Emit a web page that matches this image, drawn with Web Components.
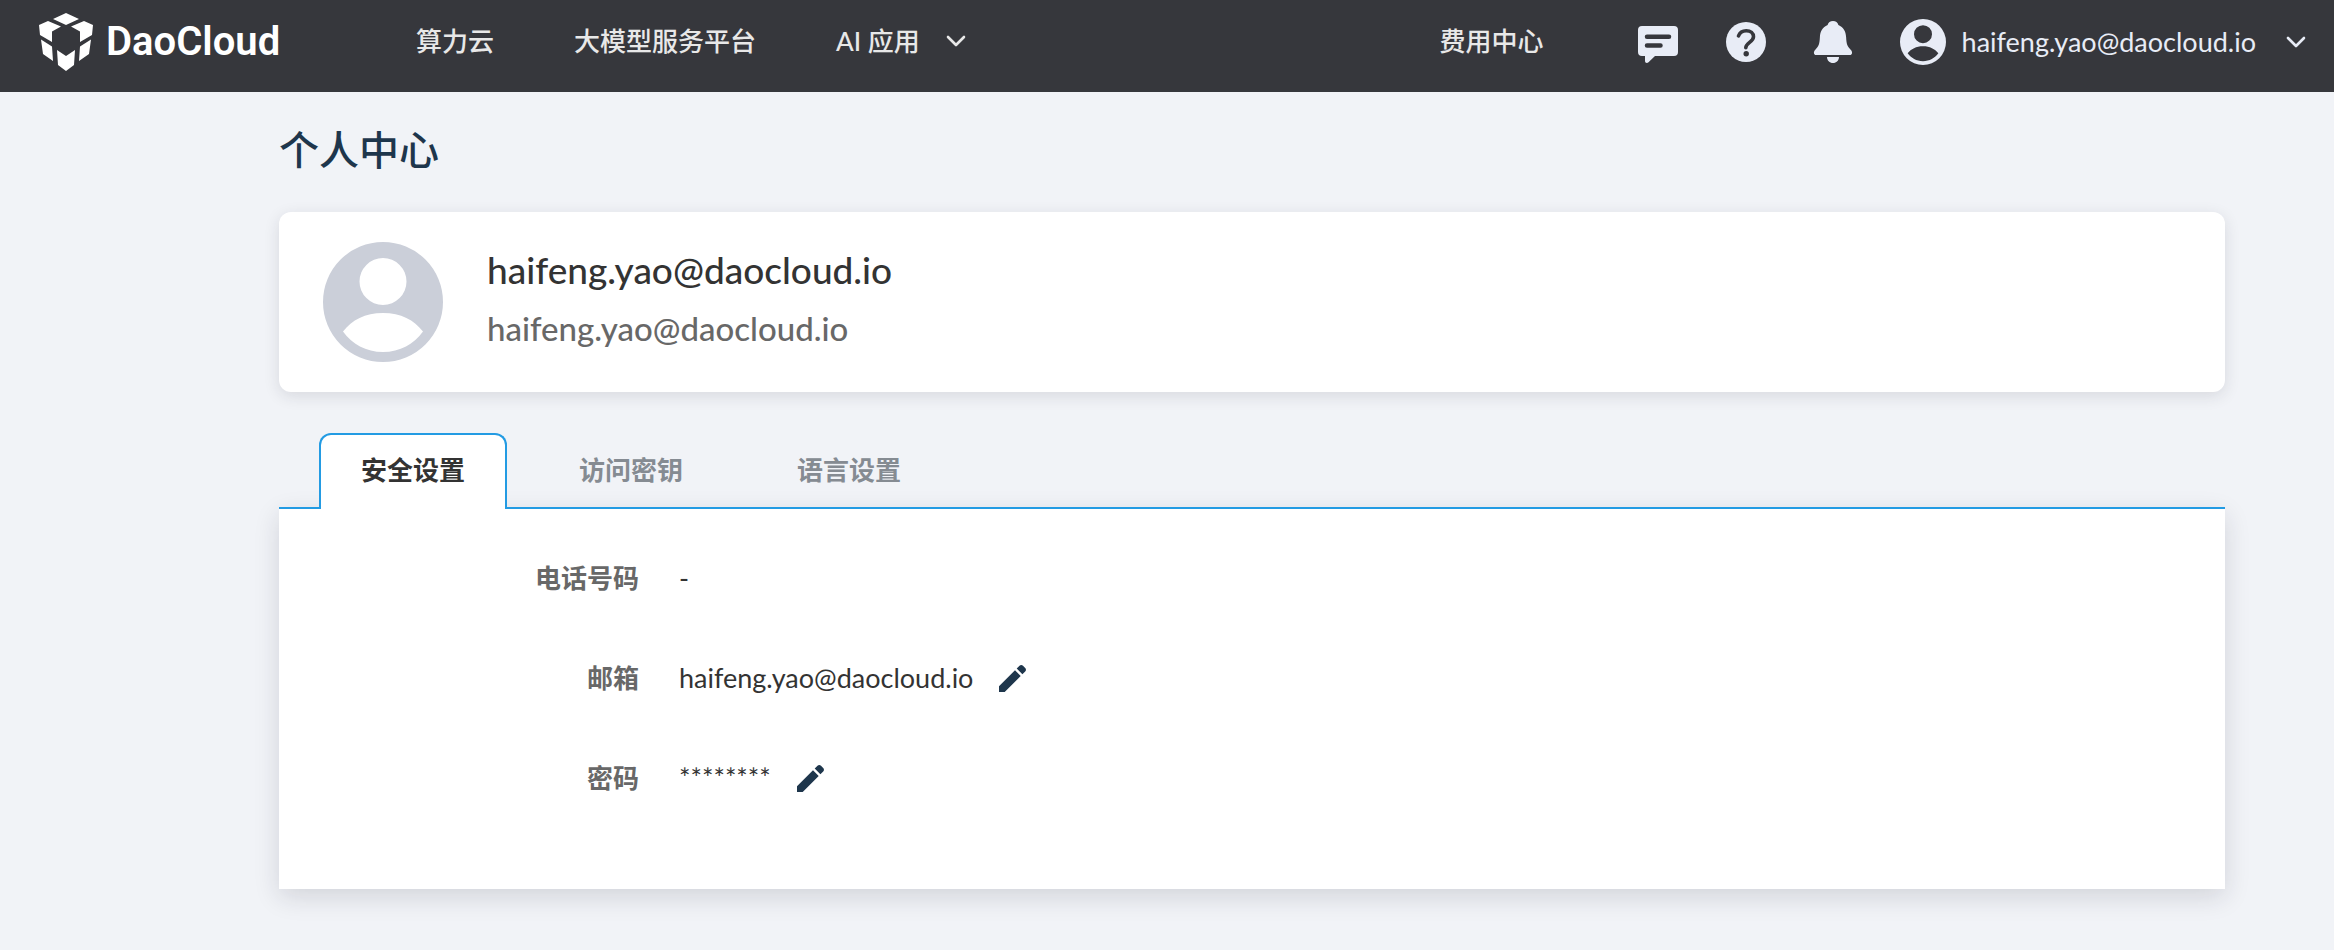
<!DOCTYPE html>
<html lang="zh-CN">
<head>
<meta charset="utf-8">
<title>个人中心 - DaoCloud</title>
<style>
  body {
    margin: 0;
    min-height: 100vh;
    background: #f1f3f7;
    color: #333;
    font: 26px/40px Lato, "Noto Sans CJK SC", sans-serif;
  }
</style>
</head>
<body>
<dc-header></dc-header>
<dc-page heading="个人中心">
  <dc-profile name="haifeng.yao@daocloud.io" email="haifeng.yao@daocloud.io"></dc-profile>
  <dc-tabs>
    <dc-tab slot="tab" selected>安全设置</dc-tab>
    <dc-tab slot="tab">访问密钥</dc-tab>
    <dc-tab slot="tab">语言设置</dc-tab>
    <dc-field label="电话号码">-</dc-field>
    <dc-field label="邮箱" editable>haifeng.yao@daocloud.io</dc-field>
    <dc-field label="密码" editable>********</dc-field>
  </dc-tabs>
</dc-page>

<script>
const define = (name, render) => customElements.define(name, class extends HTMLElement {
  connectedCallback() {
    if (this.shadowRoot) return;
    const template = document.createElement('template');
    template.innerHTML = render(this);
    this.attachShadow({ mode: 'open' }).append(template.content.cloneNode(true));
  }
});

const ICONS = {
  logo: ['0 0 54 58', `<path d="M27 0 40 6 27 12 14 6zM9 8 22 13.500 13 18.500 13 29 1 22 0 12zM45 8 32 13.500 41 18.500 41 29 53 22 54 12zM2 26.500 13 33.500 14 48 4 41zM52 26.500 41 33.500 40 48 50 41zM18 37 27 43 36 37 35 52 27 58 19 52z"/>`],
  chevron: ['0 0 20 12', `<path d="M2 2 10 10 18 2" fill="none" stroke="currentColor" stroke-width="2.600" stroke-linecap="round" stroke-linejoin="round"/>`],
  chat: ['0 0 40 40', `<path fill-rule="evenodd" d="M4 4H36a4 4 0 0 1 4 4V30a4 4 0 0 1-4 4H17L10.500 40.300C9 41.600 7 41 7 39V34H4a4 4 0 0 1-4-4V8a4 4 0 0 1 4-4zM9 12.500a2.200 2.200 0 0 0 0 4.500H31a2.200 2.200 0 0 0 0-4.500zM9 21.200a2.200 2.200 0 0 0 0 4.500H22.500a2.200 2.200 0 0 0 0-4.500z"/>`],
  help: ['0 0 40 40', `<circle cx="20" cy="20" r="20"/><path d="M12.500 13.800C14 10 17 8.700 20.200 8.700c4.400 0 7.300 2.600 7.300 6.100 0 5.200-7.700 6-7.700 11" fill="none" stroke="#36373c" stroke-width="3.600" stroke-linecap="round"/><circle cx="20.200" cy="31.800" r="2.700" fill="#36373c"/>`],
  bell: ['0 0 38 42', `<path d="M19 0c2.800 0 4.700 1.600 5.400 4 5 2.200 7.400 6.500 7.700 12 .4 7 1 9 4.800 13 2 2.200 1.300 5-1 5H2.100c-2.300 0-3-2.800-1-5C4.900 25 5.500 23 5.900 16c.3-5.500 2.700-9.800 7.700-12C14.300 1.600 16.200 0 19 0zM13 36H25c0 3.400-2.600 6-6 6s-6-2.600-6-6z"/>`],
  user: ['0 0 120 120', `<path fill-rule="evenodd" d="M60 0a60 60 0 1 1 0 120A60 60 0 1 1 60 0zM60 16a23.500 23.500 0 1 0 0 47 23.500 23.500 0 1 0 0-47zM60 71c-18 0-31 7-40 18.500C29 102 43 110 60 110s31-8 40-20.500C91 78 78 71 60 71z"/>`],
  pencil: ['0 0 27 27', `<path d="M0 21.300 16 5.300 21.700 11 5.700 27H0zM17.700 3.600 20.500.8c1-1 2.500-1 3.500 0L26.200 3c1 1 1 2.500 0 3.500L23.400 9.300z"/>`]
};

define('dc-icon', el => {
  const [box, shape] = ICONS[el.getAttribute('name')];
  return `<style>
    :host { display: block; flex: none; }
    svg { display: block; width: 100%; height: 100%; fill: currentColor; overflow: visible; }
  </style><svg viewBox="${box}" aria-hidden="true">${shape}</svg>`;
});

define('dc-header', () => `<style>
  :host { display: block; background: #36373c; color: #e8e8e8; }
  header { display: flex; align-items: center; height: 84px; padding: 0 28px 8px 39px; }
  a, button { color: inherit; font: inherit; text-decoration: none; background: none; border: 0; padding: 0; cursor: pointer; white-space: nowrap; }
  nav, .tools, .brand, .account, .menu { display: flex; align-items: center; }
  .brand { gap: 13px; width: 377px; color: #fff; font: 600 40px/48px Roboto, sans-serif; }
  .brand dc-icon { width: 54px; height: 58px; }
  nav { gap: 80px; padding-bottom: 2px; }
  nav, .cost { font-weight: 500; }
  .menu { gap: 26px; }
  .chevron { width: 20px; height: 12px; }
  .tools { margin-left: auto; gap: 48px; color: #e8ecf6; }
  .cost { margin-right: 46px; padding-bottom: 2px; color: #e8e8e8; }
  .chat, .help { width: 40px; height: 40px; }
  .bell { width: 38px; height: 42px; }
  .account { gap: 16px; font-size: 27px; }
  .avatar { width: 46px; height: 46px; }
  .account .chevron { margin-left: 14px; }
</style>
<header>
  <a class="brand" href="#"><dc-icon name="logo"></dc-icon>DaoCloud</a>
  <nav>
    <a href="#">算力云</a>
    <a href="#">大模型服务平台</a>
    <button class="menu" type="button"><span>AI 应用</span><dc-icon class="chevron" name="chevron"></dc-icon></button>
  </nav>
  <div class="tools">
    <a class="cost" href="#">费用中心</a>
    <button type="button" aria-label="消息"><dc-icon class="chat" name="chat"></dc-icon></button>
    <button type="button" aria-label="帮助"><dc-icon class="help" name="help"></dc-icon></button>
    <button type="button" aria-label="通知"><dc-icon class="bell" name="bell"></dc-icon></button>
    <button class="account" type="button"><dc-icon class="avatar" name="user"></dc-icon><span>haifeng.yao@daocloud.io</span><dc-icon class="chevron" name="chevron"></dc-icon></button>
  </div>
</header>`);

define('dc-page', el => `<style>
  :host { display: block; padding: 28px 109px 60px 279px; }
  h1 { margin: 0 0 32px; color: #1e364c; font-size: 40px; line-height: 60px; font-weight: 500; }
</style><main><h1>${el.getAttribute('heading')}</h1><slot></slot></main>`);

define('dc-profile', el => `<style>
  :host { display: flex; align-items: center; gap: 44px; padding: 30px 44px; border-radius: 12px; background: #fff; box-shadow: 0 4px 16px rgba(30, 30, 50, .12); }
  dc-icon { width: 120px; height: 120px; color: #cbcfd9; }
  .who { padding-bottom: 4px; }
  p { margin: 0; font-weight: 500; }
  .name { font-size: 37px; line-height: 56px; }
  .email { font-size: 33px; line-height: 60px; color: #686868; }
</style>
<dc-icon name="user"></dc-icon>
<div class="who"><p class="name">${el.getAttribute('name')}</p><p class="email">${el.getAttribute('email')}</p></div>`);

define('dc-tabs', () => `<style>
  :host { display: block; margin-top: 41px; }
  .bar { display: flex; gap: 30px; padding: 0 40px; margin-bottom: -2px; position: relative; }
  .panel { padding: 39px 0 81px; background: #fff; border-top: 2px solid #239be3; box-shadow: 0 8px 24px rgba(30, 30, 50, .14); }
  .fields { display: grid; gap: 40px; }
</style>
<div class="bar" role="tablist"><slot name="tab"></slot></div>
<section class="panel"><div class="fields"><slot></slot></div></section>`);

define('dc-tab', el => `<style>
  :host { display: block; }
  button { display: block; height: 76px; padding: 0 40px 4px; border: 2px solid transparent; border-bottom: 0; background: none; color: #858b92; font: inherit; font-weight: 600; cursor: pointer; }
  :host([selected]) button { border-color: #239be3; border-radius: 12px 12px 0 0; background: #fff; color: #333; }
</style><button type="button" role="tab" aria-selected="${el.hasAttribute('selected')}"><slot></slot></button>`);

define('dc-field', el => `<style>
  :host { display: flex; align-items: center; min-height: 60px; }
  .label { width: 360px; margin-right: 40px; text-align: right; color: #686868; font-weight: 600; }
  .value { font-size: 27px; }
  button { margin-left: 26px; padding: 0; border: 0; background: none; color: #1e364c; cursor: pointer; }
  dc-icon { width: 27px; height: 27px; }
</style>
<span class="label">${el.getAttribute('label')}</span><span class="value"><slot></slot></span>
${el.hasAttribute('editable') ? `<button type="button" aria-label="编辑${el.getAttribute('label')}"><dc-icon name="pencil"></dc-icon></button>` : ''}`);
</script>
</body>
</html>
